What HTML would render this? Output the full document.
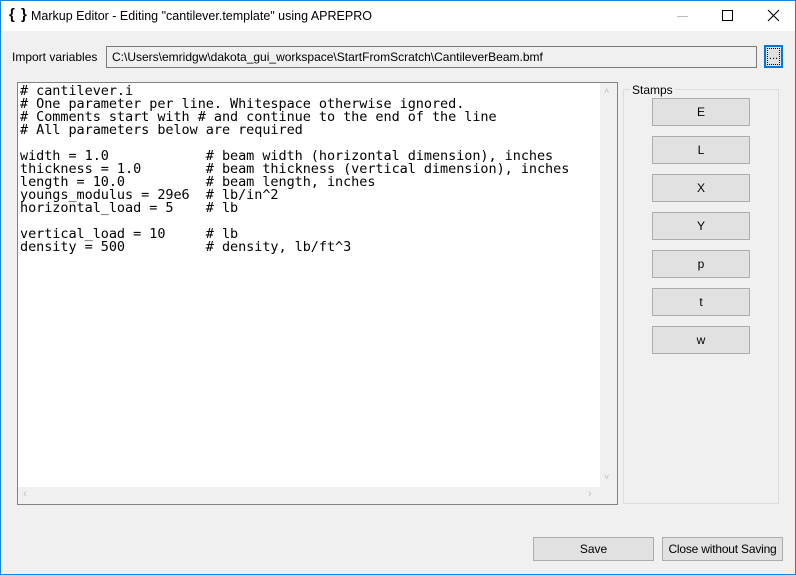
<!DOCTYPE html>
<html><head><style>
*{margin:0;padding:0;box-sizing:border-box}
body{width:796px;height:575px;overflow:hidden;background:#f0f0f0;font-family:"Liberation Sans",sans-serif;font-size:12px;color:#000;position:relative}
.win{position:absolute;left:0;top:0;width:796px;height:575px;border:1px solid #1883d7}
.title{position:absolute;left:1px;top:1px;width:794px;height:30px;background:#fff}
.abs{position:absolute}
.btn{position:absolute;background:#e1e1e1;border:1px solid #adadad;text-align:center;font-size:12px}
pre{font-family:"DejaVu Sans Mono","Liberation Mono",monospace;font-size:13.5px;line-height:13px;position:absolute;left:20px;top:85px;letter-spacing:-0.05px}
</style></head><body>
<div class="win"></div>
<div class="title">
<div class="abs" style="left:8px;top:5px;font-size:15px;font-weight:bold;letter-spacing:1px">{ }</div>
<div class="abs" style="left:30px;top:8px;font-size:12.5px">Markup Editor - Editing "cantilever.template" using APREPRO</div>
<div class="abs" style="left:676px;top:15px;width:11px;height:1px;background:#bbb"></div>
<div class="abs" style="left:721px;top:9px;width:11px;height:11px;border:1px solid #000"></div>
<svg class="abs" style="left:766px;top:8px" width="13" height="13"><path d="M1 1L12 12M12 1L1 12" stroke="#000" stroke-width="1.1"/></svg>
</div>
<div class="abs" style="left:12px;top:50px">Import variables</div>
<div class="abs" style="left:106px;top:46px;width:651px;height:22px;border:1px solid #7a7a7a;background:#f0f0f0;padding:3px 0 0 5px;font-size:12px">C:\Users\emridgw\dakota_gui_workspace\StartFromScratch\CantileverBeam.bmf</div>
<div class="abs" style="left:764px;top:45px;width:19px;height:23px;border:2px solid #0078d7;background:#e1e1e1;text-align:center;font-size:11px;line-height:18px"><div style="position:absolute;inset:1px;border:1px dotted #000"></div>...</div>
<div class="abs" style="left:17px;top:82px;width:601px;height:423px;border:1px solid #828282;background:#fff"></div>
<div class="abs" style="left:600px;top:83px;width:17px;height:404px;background:#f0f0f0"></div>
<div class="abs" style="left:18px;top:487px;width:599px;height:17px;background:#f0f0f0"></div>
<div class="abs" style="left:604px;top:86px;color:#c0c0c0;font-size:9px">&#x2C4;</div>
<div class="abs" style="left:604px;top:472px;color:#c0c0c0;font-size:9px">&#x2C5;</div>
<div class="abs" style="left:23px;top:488px;color:#c0c0c0;font-size:11px">&lsaquo;</div>
<div class="abs" style="left:588px;top:488px;color:#c0c0c0;font-size:11px">&rsaquo;</div>
<pre># cantilever.i
# One parameter per line. Whitespace otherwise ignored.
# Comments start with # and continue to the end of the line
# All parameters below are required

width = 1.0            # beam width (horizontal dimension), inches
thickness = 1.0        # beam thickness (vertical dimension), inches
length = 10.0          # beam length, inches
youngs_modulus = 29e6  # lb/in^2
horizontal_load = 5    # lb

vertical_load = 10     # lb
density = 500          # density, lb/ft^3</pre>
<div class="abs" style="left:623px;top:89px;width:156px;height:415px;border:1px solid #dcdcdc"></div>
<div class="abs" style="left:630px;top:83px;background:#f0f0f0;padding:0 2px">Stamps</div>
<div class="btn" style="left:652px;top:98px;width:98px;height:28px;line-height:26px">E</div>
<div class="btn" style="left:652px;top:136px;width:98px;height:28px;line-height:26px">L</div>
<div class="btn" style="left:652px;top:174px;width:98px;height:28px;line-height:26px">X</div>
<div class="btn" style="left:652px;top:212px;width:98px;height:28px;line-height:26px">Y</div>
<div class="btn" style="left:652px;top:250px;width:98px;height:28px;line-height:26px">p</div>
<div class="btn" style="left:652px;top:288px;width:98px;height:28px;line-height:26px">t</div>
<div class="btn" style="left:652px;top:326px;width:98px;height:28px;line-height:26px">w</div>
<div class="btn" style="left:533px;top:537px;width:121px;height:24px;line-height:22px">Save</div>
<div class="btn" style="left:662px;top:537px;width:121px;height:24px;line-height:22px;letter-spacing:-0.2px">Close without Saving</div>
</body></html>
